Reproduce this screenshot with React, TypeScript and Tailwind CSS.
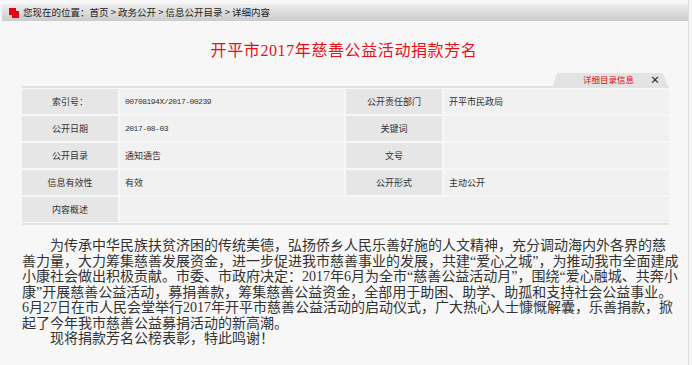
import React from "react";

const rows = [
  { label: "索引号：", value: "00708194X/2017-00239", label2: "公开责任部门", value2: "开平市民政局" },
  { label: "公开日期", value: "2017-08-03", label2: "关键词", value2: "" },
  { label: "公开目录", value: "通知通告", label2: "文号", value2: "" },
  { label: "信息有效性", value: "有效", label2: "公开形式", value2: "主动公开" },
];

const bodyLines = [
  "善力量，大力筹集慈善发展资金，进一步促进我市慈善事业的发展，共建“爱心之城”，为推动我市全面建成",
  "小康社会做出积极贡献。市委、市政府决定：2017年6月为全市“慈善公益活动月”，围绕“爱心融城、共奔小",
  "康”开展慈善公益活动，募捐善款，筹集慈善公益资金，全部用于助困、助学、助孤和支持社会公益事业。",
  "6月27日在市人民会堂举行2017年开平市慈善公益活动的启动仪式，广大热心人士慷慨解囊，乐善捐款，掀",
  "起了今年我市慈善公益募捐活动的新高潮。",
];

// ascii values look like half-width mono digits in the shot
const isAscii = (s: string) => /^[\x00-\x7f]+$/.test(s);

const Value = ({ text, span }: { text: string; span?: boolean }) => (
  <div
    className={`h-[25px] bg-[#f1f1f1] flex items-center pl-[5px] ${span ? "col-span-3" : ""} ${
      isAscii(text) && text ? "font-['Liberation_Mono',monospace] text-[8px] tracking-[-0.5px]" : ""
    }`}
  >
    {text}
  </div>
);

const App: React.FC = () => {
  return (
    <div className="w-[692px] h-[365px] bg-[#f7f7f7] overflow-hidden flex font-['Noto_Sans_CJK_SC',sans-serif]">
      <div className="w-[689px] border-r border-[#dedede] flex flex-col">
        {/* Breadcrumb bar */}
        <div className="mt-[4px] ml-[2px] h-[17px] bg-gradient-to-b from-[#eeeeee] to-[#cbcbcb] flex items-center pl-[7px] text-[9.5px] text-[#222] whitespace-nowrap">
          <span className="relative w-[11px] h-[10px] mr-[3px]">
            <span className="absolute left-0 top-0 w-[7px] h-[7px] bg-[#e60012]" />
            <span className="absolute left-[3px] top-[3px] w-[7px] h-[7px] bg-[#e60012]" />
          </span>
          <span>您现在的位置：</span>
          <span>首页 &gt; 政务公开 &gt; 信息公开目录 &gt; 详细内容</span>
        </div>

        {/* Title */}
        <h1 className="mt-[18px] text-center text-[16px] leading-[24px] tracking-[0.6px] text-[#e8101a] font-['Liberation_Serif','Noto_Sans_CJK_SC',serif]">
          开平市2017年慈善公益活动捐款芳名
        </h1>

        <div className="mx-[22px] w-[647px]">
          {/* Tab */}
          <div className="mt-[10px] flex justify-end pr-[1px]">
            <div className="relative h-[13px] w-[115px] flex items-center text-[8.5px] leading-none whitespace-nowrap">
              <svg className="absolute inset-0" width="115" height="13" viewBox="0 0 115 13">
                <polygon points="4,0 110,0 115,13 0,13" fill="#e3e3e3" />
              </svg>
              <span className="relative ml-[30px] text-[#e60012]">详细目录信息</span>
              <span className="relative ml-[16px] text-[#222] font-bold text-[10px]">×</span>
            </div>
          </div>

          {/* Info table */}
          <div className="border-t-2 border-b-2 border-[#e2e2e2] py-[1px] grid grid-cols-[96px_224px_96px_225px] gap-[2px] text-[9px] text-[#333]">
            {rows.map((r) => (
              <React.Fragment key={r.label}>
                <div className="h-[25px] bg-[#e6e6e6] flex items-center justify-center">{r.label}</div>
                <Value text={r.value} />
                <div className="h-[25px] bg-[#e6e6e6] flex items-center justify-center">{r.label2}</div>
                <Value text={r.value2} />
              </React.Fragment>
            ))}
            <div className="h-[25px] bg-[#e6e6e6] flex items-center justify-center">内容概述</div>
            <Value text="" span />
          </div>

          {/* Body */}
          <div className="mt-[13px] text-[14px] leading-[15.5px] text-[#333] whitespace-nowrap font-['Liberation_Serif','Noto_Sans_CJK_SC',serif]">
            <p className="pl-[28px]">为传承中华民族扶贫济困的传统美德，弘扬侨乡人民乐善好施的人文精神，充分调动海内外各界的慈</p>
            {bodyLines.map((l) => (
              <p key={l}>{l}</p>
            ))}
            <p className="pl-[28px]">现将捐款芳名公榜表彰，特此鸣谢！</p>
          </div>
        </div>
      </div>
    </div>
  );
};

export default App;
